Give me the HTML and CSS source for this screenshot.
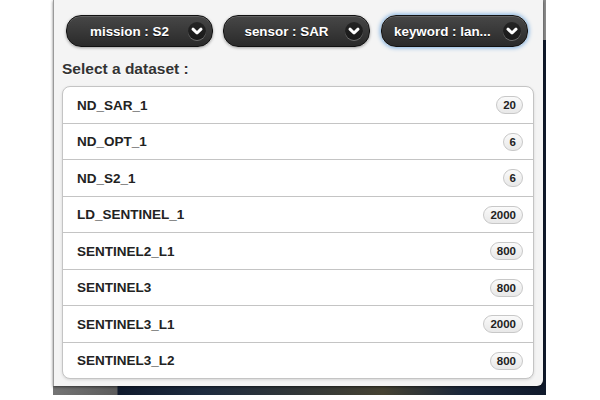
FILE: index.html
```html
<!DOCTYPE html>
<html>
<head>
<meta charset="utf-8">
<link rel="stylesheet" href="styles.css">
</head>
<body>
<div class="stage">
  <div class="panel">
    <div class="filters">
      <div class="select-btn"><span class="select-text">mission : S2</span><span class="select-icon"><svg viewBox="0 0 18 18" width="18" height="18"><path d="M5 7.2 L9 11 L13 7.2" fill="none" stroke="#fff" stroke-width="3" stroke-linecap="round" stroke-linejoin="round"/></svg></span></div>
      <div class="select-btn"><span class="select-text">sensor : SAR</span><span class="select-icon"><svg viewBox="0 0 18 18" width="18" height="18"><path d="M5 7.2 L9 11 L13 7.2" fill="none" stroke="#fff" stroke-width="3" stroke-linecap="round" stroke-linejoin="round"/></svg></span></div>
      <div class="select-btn focus"><span class="select-text">keyword : lan...</span><span class="select-icon"><svg viewBox="0 0 18 18" width="18" height="18"><path d="M5 7.2 L9 11 L13 7.2" fill="none" stroke="#fff" stroke-width="3" stroke-linecap="round" stroke-linejoin="round"/></svg></span></div>
    </div>
    <div class="label">Select a dataset :</div>
    <ul class="list">
      <li class="row"><span class="name">ND_SAR_1</span><span class="count">20</span></li>
      <li class="row"><span class="name">ND_OPT_1</span><span class="count">6</span></li>
      <li class="row"><span class="name">ND_S2_1</span><span class="count">6</span></li>
      <li class="row"><span class="name">LD_SENTINEL_1</span><span class="count">2000</span></li>
      <li class="row"><span class="name">SENTINEL2_L1</span><span class="count">800</span></li>
      <li class="row"><span class="name">SENTINEL3</span><span class="count">800</span></li>
      <li class="row"><span class="name">SENTINEL3_L1</span><span class="count">2000</span></li>
      <li class="row"><span class="name">SENTINEL3_L2</span><span class="count">800</span></li>
    </ul>
  </div>
</div>
</body>
</html>
```

FILE: styles.css
```css
html, body {
  margin: 0;
  padding: 0;
  background: #ffffff;
}

body {
  font-family: "Liberation Sans", Arial, sans-serif;
}

.stage {
  margin-left: 53px;
  width: 493px;
  height: 395px;
  background:
    linear-gradient(#8c8c8c 0, #8c8c8c 40px, transparent 40px) right top / 3px 40px no-repeat,
    linear-gradient(to right, #747474 0, #5c5c5c 64px, #0f1a2d 65px, #1d2b3f 150px, #454232 330px, #1a273b 410px, #101a2c 100%);
}

.panel {
  box-sizing: border-box;
  width: 490px;
  height: 386px;
  background: #f4f4f4;
  border-left: 1px solid #9a9a9a;
  border-bottom-right-radius: 6px;
  box-shadow: 0 1px 3px rgba(0, 0, 0, 0.55);
  padding: 15px 0 0 12px;
}

.filters {
  display: flex;
  gap: 10px;
}

.select-btn {
  box-sizing: border-box;
  width: 147px;
  height: 32px;
  border: 1px solid #111;
  border-radius: 15px;
  background: linear-gradient(#474747, #2a2a2a);
  box-shadow: inset 0 1px 0 rgba(255, 255, 255, 0.15), 0 1px 3px rgba(0, 0, 0, 0.35);
  display: flex;
  align-items: center;
  padding: 0 6px 0 12px;
  color: #fff;
  font-weight: bold;
  font-size: 13.4px;
  text-shadow: 0 1px 0 #111;
}

.select-btn.focus {
  margin-left: 1px;
  box-shadow: inset 0 1px 0 rgba(255, 255, 255, 0.15), 0 0 4px 1px #7fb0e0;
}

.select-text {
  flex: 1;
  text-align: center;
  white-space: nowrap;
  padding-right: 8px;
}

.focus .select-text {
  text-align: left;
  padding-right: 0;
}

.select-icon {
  width: 18px;
  height: 18px;
  border-radius: 50%;
  background: rgba(0, 0, 0, 0.45);
  box-shadow: 0 1px 0 rgba(255, 255, 255, 0.3);
  display: flex;
}

.label {
  margin-top: 13px;
  margin-left: -4px;
  font-size: 15.5px;
  font-weight: bold;
  color: #333;
  text-shadow: 0 1px 0 #fff;
  line-height: 18px;
}

.list {
  list-style: none;
  margin: 8px 0 0 -4px;
  padding: 0;
  width: 472px;
  box-sizing: border-box;
  background: #fff;
  border: 1px solid #c4c4c4;
  border-radius: 8px;
  box-shadow: 0 1px 3px rgba(0, 0, 0, 0.12);
}

.row {
  box-sizing: border-box;
  display: flex;
  align-items: center;
  justify-content: space-between;
  height: 36.5px;
  padding: 1px 10px 0 14px;
  border-top: 1px solid #c4c4c4;
  font-size: 13.5px;
  font-weight: bold;
  color: #222;
}

.row:first-child {
  border-top: none;
  height: 35.5px;
}

.count {
  font-size: 11.5px;
  font-weight: bold;
  color: #222;
  line-height: 16px;
  padding: 0 6px;
  min-width: 6px;
  text-align: center;
  border: 1px solid #c8c8c8;
  border-radius: 9px;
  background: linear-gradient(#fafafa, #e8e8e8);
}
```
